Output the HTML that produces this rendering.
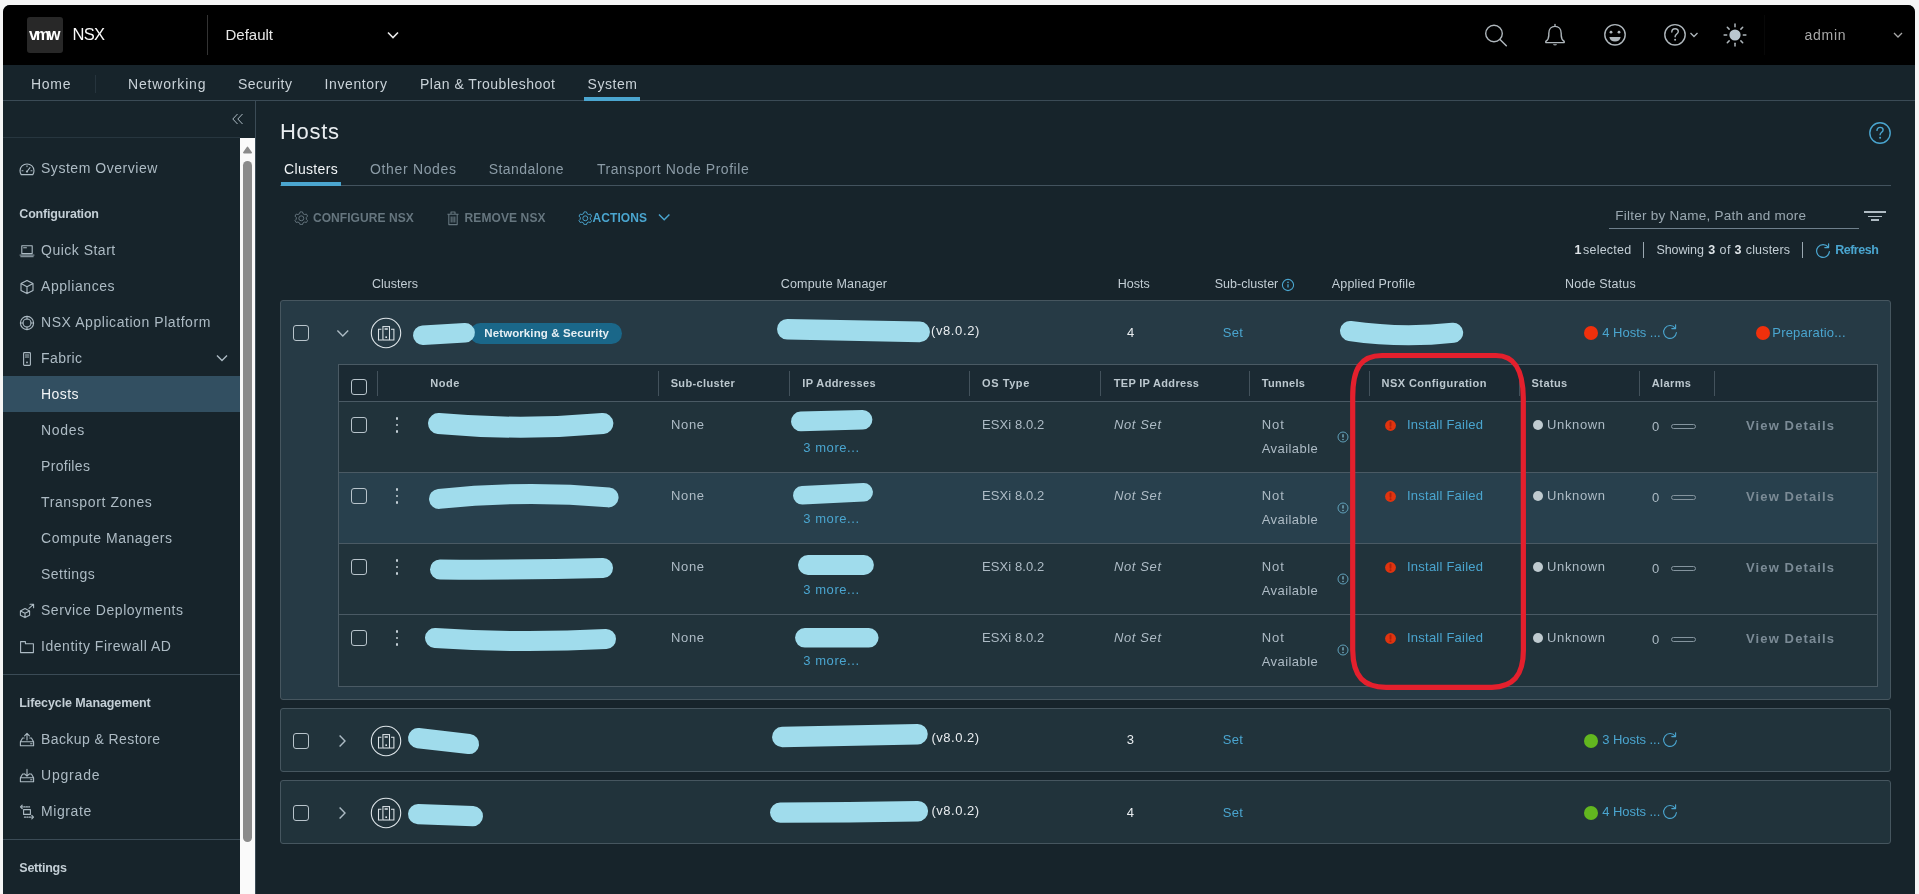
<!DOCTYPE html><html lang="en"><head><meta charset="utf-8"><title>NSX - Hosts</title><style>
html,body{margin:0;padding:0;}
body{width:1919px;height:894px;position:relative;overflow:hidden;background:#f5f5f5;font-family:"Liberation Sans", Arial, sans-serif;}
.a{position:absolute;display:block;}
.t{white-space:pre;}
</style></head><body>
<div class="a" style="left:3px;top:5px;width:1912px;height:889px;background:#17242b;border-radius:7px 7px 0 0;overflow:hidden;"><div class="a" style="left:0;top:0;width:1912px;height:60px;background:#000000;"></div></div>
<div class="a" style="left:27px;top:17px;width:36px;height:36px;background:#282828;border-radius:3px;"></div>
<div class="a" style="left:207px;top:15px;width:1px;height:40px;background:#333333;"></div>
<svg class="a" style="left:386px;top:30px;" width="14" height="10" viewBox="0 0 14 10" fill="none"><path d="M2 2.5 L7 7.5 L12 2.5" stroke="#e8e8e8" stroke-width="1.6"/></svg>
<svg class="a" style="left:1482px;top:22px;" width="28" height="28" viewBox="0 0 28 28" fill="none"><circle cx="12" cy="11.5" r="8.3" stroke="#aeb6bb" stroke-width="1.4"/><path d="M18 17.5 L24.3 23.8" stroke="#aeb6bb" stroke-width="1.5" stroke-linecap="round"/></svg>
<svg class="a" style="left:1542px;top:22px;" width="28" height="28" viewBox="0 0 28 28" fill="none"><path d="M13 2.4 V4 M3.8 19.4 C5.8 18 6.8 16.2 6.8 13.2 V11.4 C6.8 7.2 9.4 4.4 13 4.4 C16.6 4.4 19.2 7.2 19.2 11.4 V13.2 C19.2 16.2 20.2 18 22.2 19.4 V20.6 H3.8 Z" stroke="#aeb6bb" stroke-width="1.4" stroke-linejoin="round" stroke-linecap="round"/><path d="M11 22.2 C11.6 23.8 14.4 23.8 15 22.2 Z" fill="#aeb6bb"/></svg>
<svg class="a" style="left:1601px;top:21px;" width="28" height="28" viewBox="0 0 28 28" fill="none"><circle cx="14" cy="13.8" r="10.2" stroke="#aeb6bb" stroke-width="1.4"/><circle cx="10" cy="11.2" r="1.4" fill="#aeb6bb"/><circle cx="18" cy="11.2" r="1.4" fill="#aeb6bb"/><path d="M8.4 16 H19.6 C19.2 19 17 20.6 14 20.6 C11 20.6 8.8 19 8.4 16 Z" fill="#aeb6bb"/></svg>
<svg class="a" style="left:1661px;top:21px;" width="28" height="28" viewBox="0 0 28 28" fill="none"><circle cx="14" cy="13.8" r="10.2" stroke="#aeb6bb" stroke-width="1.4"/><path d="M10.8 11 C10.8 8.9 12.2 7.8 14.1 7.8 C16 7.8 17.3 9 17.3 10.6 C17.3 13 14.1 13.2 14.1 15.8" stroke="#aeb6bb" stroke-width="1.4" stroke-linecap="round"/><circle cx="14.1" cy="18.8" r="1" fill="#aeb6bb"/></svg>
<svg class="a" style="left:1689px;top:31px;" width="10" height="8" viewBox="0 0 10 8" fill="none"><path d="M1.5 2 L5 5.5 L8.5 2" stroke="#aeb6bb" stroke-width="1.3"/></svg>
<svg class="a" style="left:1721px;top:21px;" width="28" height="28" viewBox="0 0 28 28" fill="none"><circle cx="14" cy="14" r="5.6" fill="#bac7d0"/><path d="M14 3.0999999999999996 V5.699999999999999" transform="rotate(0 14 14)" stroke="#aeb6bb" stroke-width="1.5" stroke-linecap="round"/><path d="M14 3.0999999999999996 V5.699999999999999" transform="rotate(45 14 14)" stroke="#aeb6bb" stroke-width="1.5" stroke-linecap="round"/><path d="M14 3.0999999999999996 V5.699999999999999" transform="rotate(90 14 14)" stroke="#aeb6bb" stroke-width="1.5" stroke-linecap="round"/><path d="M14 3.0999999999999996 V5.699999999999999" transform="rotate(135 14 14)" stroke="#aeb6bb" stroke-width="1.5" stroke-linecap="round"/><path d="M14 3.0999999999999996 V5.699999999999999" transform="rotate(180 14 14)" stroke="#aeb6bb" stroke-width="1.5" stroke-linecap="round"/><path d="M14 3.0999999999999996 V5.699999999999999" transform="rotate(225 14 14)" stroke="#aeb6bb" stroke-width="1.5" stroke-linecap="round"/><path d="M14 3.0999999999999996 V5.699999999999999" transform="rotate(270 14 14)" stroke="#aeb6bb" stroke-width="1.5" stroke-linecap="round"/><path d="M14 3.0999999999999996 V5.699999999999999" transform="rotate(315 14 14)" stroke="#aeb6bb" stroke-width="1.5" stroke-linecap="round"/></svg>
<div class="a" style="left:1764px;top:15px;width:1px;height:40px;background:#080808;"></div>
<svg class="a" style="left:1892px;top:31px;" width="12" height="8" viewBox="0 0 12 8" fill="none"><path d="M2 2 L6 6 L10 2" stroke="#a8a8a8" stroke-width="1.3"/></svg>
<div class="a" style="left:3px;top:100px;width:1912px;height:1px;background:#3b4b56;"></div>
<div class="a" style="left:95px;top:75px;width:1px;height:18px;background:#26343d;"></div>
<div class="a" style="left:584px;top:97px;width:56px;height:4px;background:#4ba6d0;"></div>
<div class="a" style="left:255px;top:101px;width:1px;height:793px;background:#3b4b56;"></div>
<div class="a" style="left:3px;top:137px;width:237px;height:1px;background:#27363f;"></div>
<svg class="a" style="left:231px;top:112px;" width="14" height="14" viewBox="0 0 14 14" fill="none"><path d="M6.5 2 L1.8 7 L6.5 12 M11.5 2 L6.8 7 L11.5 12" stroke="#adbbc4" stroke-width="1"/></svg>
<div class="a" style="left:240px;top:138px;width:15px;height:756px;background:#fafafa;"></div>
<svg class="a" style="left:242px;top:145px;" width="11" height="9" viewBox="0 0 11 9" fill="none"><path d="M1.8 7.6 L5.5 2.4 L9.2 7.6 Z" fill="#8b8b8b" stroke="#8b8b8b" stroke-width="1.6" stroke-linejoin="round"/></svg>
<div class="a" style="left:243px;top:161px;width:9px;height:681px;background:#8b8b8b;border-radius:4.5px;"></div>
<div class="a" style="left:3px;top:376px;width:237px;height:36px;background:#324f61;"></div>
<div class="a" style="left:3px;top:674px;width:237px;height:1px;background:#3b4b56;"></div>
<div class="a" style="left:3px;top:839px;width:237px;height:1px;background:#3b4b56;"></div>
<svg class="a" style="left:215px;top:353px;" width="14" height="10" viewBox="0 0 14 10" fill="none"><path d="M2 2.5 L7 7.5 L12 2.5" stroke="#adbbc4" stroke-width="1.4"/></svg>
<svg class="a" style="left:19px;top:160.5px;" width="16" height="16" viewBox="0 0 16 16" fill="none"><path d="M2.2 13.6 H13.8 C14.6 12.4 15 11.2 15 9.8 C15 6 11.9 3 8 3 C4.1 3 1 6 1 9.8 C1 11.2 1.4 12.4 2.2 13.6 Z" stroke="#adbbc4" stroke-width="1.1" stroke-linejoin="round" stroke-linecap="round"/><path d="M8 10.5 L11 6.6" stroke="#adbbc4" stroke-width="1.1" stroke-linejoin="round" stroke-linecap="round"/><circle cx="8" cy="10.6" r="1.1" fill="#adbbc4"/><path d="M3 9.8 H4 M8 4.8 V5.6 M12 9.8 H13" stroke="#adbbc4" stroke-width="1.1" stroke-linejoin="round" stroke-linecap="round"/></svg>
<svg class="a" style="left:19px;top:242.5px;" width="16" height="16" viewBox="0 0 16 16" fill="none"><rect x="2.8" y="2.8" width="10.4" height="7.8" stroke="#adbbc4" stroke-width="1.1" stroke-linejoin="round" stroke-linecap="round"/><path d="M1 12.1 H15 M1.8 13.7 H14.2" stroke="#adbbc4" stroke-width="0.9" stroke-linecap="round"/><path d="M4.6 4.8 H7.4" stroke="#adbbc4" stroke-width="1.1" stroke-linejoin="round" stroke-linecap="round"/></svg>
<svg class="a" style="left:19px;top:278.5px;" width="16" height="16" viewBox="0 0 16 16" fill="none"><path d="M8 1.4 L14 4.6 V11.4 L8 14.6 L2 11.4 V4.6 Z M2 4.6 L8 7.8 L14 4.6 M8 7.8 V14.6" stroke="#adbbc4" stroke-width="1.1" stroke-linejoin="round" stroke-linecap="round"/></svg>
<svg class="a" style="left:19px;top:314.5px;" width="16" height="16" viewBox="0 0 16 16" fill="none"><circle cx="8" cy="8" r="6.6" stroke="#adbbc4" stroke-width="1.1" stroke-linejoin="round" stroke-linecap="round"/><circle cx="8" cy="8" r="4" stroke="#adbbc4" stroke-width="1.1" stroke-linejoin="round" stroke-linecap="round"/><path d="M8 1.4 V4 M8 12 V14.6 M1.4 8 H4 M12 8 H14.6" stroke="#adbbc4" stroke-width="1.1" stroke-linejoin="round" stroke-linecap="round"/></svg>
<svg class="a" style="left:19px;top:350.5px;" width="16" height="16" viewBox="0 0 16 16" fill="none"><rect x="4.6" y="1.6" width="6.8" height="12.8" rx="0.8" stroke="#adbbc4" stroke-width="1.1" stroke-linejoin="round" stroke-linecap="round"/><path d="M6.4 4 H9.6 M6.4 6 H9.6" stroke="#adbbc4" stroke-width="1.1" stroke-linejoin="round" stroke-linecap="round"/><rect x="7.2" y="10.6" width="1.6" height="1.6" fill="#adbbc4"/></svg>
<svg class="a" style="left:19px;top:602.5px;" width="16" height="16" viewBox="0 0 16 16" fill="none"><path d="M6 5.6 L10.6 7.9 V12.3 L6 14.6 L1.4 12.3 V7.9 Z M1.4 7.9 L6 10.2 L10.6 7.9 M6 10.2 V14.6" stroke="#adbbc4" stroke-width="1.1" stroke-linejoin="round" stroke-linecap="round"/><path d="M10 5.4 L14.4 1.4 M11 1.2 H14.6 V4.8" stroke="#adbbc4" stroke-width="1.1" stroke-linejoin="round" stroke-linecap="round"/></svg>
<svg class="a" style="left:19px;top:638.5px;" width="16" height="16" viewBox="0 0 16 16" fill="none"><path d="M1.6 13.6 V2.6 H6.4 V4.8 H14.4 V13.6 Z" stroke="#adbbc4" stroke-width="1.1" stroke-linejoin="round" stroke-linecap="round"/></svg>
<svg class="a" style="left:19px;top:731.5px;" width="16" height="16" viewBox="0 0 16 16" fill="none"><path d="M5.2 6 H3.6 L1.4 9.8 V13.8 H14.6 V9.8 L12.4 6 H10.8 M1.4 9.8 H14.6" stroke="#adbbc4" stroke-width="1.1" stroke-linejoin="round" stroke-linecap="round"/><path d="M8 8 V1.6 M5.6 3.8 L8 1.4 L10.4 3.8" stroke="#adbbc4" stroke-width="1.1" stroke-linejoin="round" stroke-linecap="round"/><path d="M11.6 11.8 H13" stroke="#adbbc4" stroke-width="1.1" stroke-linejoin="round" stroke-linecap="round"/></svg>
<svg class="a" style="left:19px;top:767.5px;" width="16" height="16" viewBox="0 0 16 16" fill="none"><path d="M5 6 H3.6 L1.4 9.8 V13.8 H14.6 V9.8 L12.4 6 H11 M1.4 9.8 H14.6" stroke="#adbbc4" stroke-width="1.1" stroke-linejoin="round" stroke-linecap="round"/><path d="M8 1.4 V8 M5.6 5.8 L8 8.2 L10.4 5.8" stroke="#adbbc4" stroke-width="1.1" stroke-linejoin="round" stroke-linecap="round"/><path d="M11.6 11.8 H13" stroke="#adbbc4" stroke-width="1.1" stroke-linejoin="round" stroke-linecap="round"/></svg>
<svg class="a" style="left:19px;top:803.5px;" width="16" height="16" viewBox="0 0 16 16" fill="none"><rect x="4.6" y="5.6" width="6.8" height="4.8" stroke="#adbbc4" stroke-width="1.1" stroke-linejoin="round" stroke-linecap="round"/><path d="M2.4 2.9 H10.6" stroke="#adbbc4" stroke-width="1.1" stroke-linejoin="round" stroke-linecap="round" stroke-dasharray="1.3 1.1"/><path d="M3.2 1.2 L1.5 2.9 L3.2 4.6" stroke="#adbbc4" stroke-width="1.1" stroke-linejoin="round" stroke-linecap="round"/><path d="M5.4 13.1 H13.6" stroke="#adbbc4" stroke-width="1.1" stroke-linejoin="round" stroke-linecap="round" stroke-dasharray="1.3 1.1"/><path d="M12.8 11.4 L14.5 13.1 L12.8 14.8" stroke="#adbbc4" stroke-width="1.1" stroke-linejoin="round" stroke-linecap="round"/></svg>
<svg class="a" style="left:1867.5px;top:120.8px;" width="24" height="24" viewBox="0 0 24 24" fill="none"><circle cx="12" cy="12" r="10.2" stroke="#4aa5cf" stroke-width="1.4"/><path d="M9 9.4 C9 7.4 10.3 6.4 12.1 6.4 C13.9 6.4 15.1 7.5 15.1 9 C15.1 11.2 12.1 11.4 12.1 13.8" stroke="#4aa5cf" stroke-width="1.4" stroke-linecap="round"/><circle cx="12.1" cy="16.8" r="1" fill="#4aa5cf"/></svg>
<div class="a" style="left:280px;top:185px;width:1611px;height:1px;background:#43535e;"></div>
<div class="a" style="left:281px;top:182px;width:60px;height:4px;background:#4ba6d0;"></div>
<svg class="a" style="left:293.7px;top:210.7px;" width="14.6" height="14.6" viewBox="0 0 16 16" fill="none"><path d="M8 0.9 L9.3 1 L9.9 2.9 L11.7 3.9 L13.6 3.4 L14.9 5.6 L13.5 7 V9 L14.9 10.4 L13.6 12.6 L11.7 12.1 L9.9 13.1 L9.3 15 H6.7 L6.1 13.1 L4.3 12.1 L2.4 12.6 L1.1 10.4 L2.5 9 V7 L1.1 5.6 L2.4 3.4 L4.3 3.9 L6.1 2.9 L6.7 1 Z" stroke="#66767f" stroke-width="1.05" stroke-linejoin="round" fill="none"/><circle cx="8" cy="8" r="2.7" stroke="#66767f" stroke-width="1.05"/></svg>
<svg class="a" style="left:445px;top:210px;" width="16" height="16" viewBox="0 0 16 16" fill="none"><path d="M2.4 4.2 H13.6 M6 4 V2 H10 V4 M3.8 4.4 V14.6 H12.2 V4.4 M6.2 6.6 V12.4 M8 6.6 V12.4 M9.8 6.6 V12.4" stroke="#66767f" stroke-width="1.1" stroke-linejoin="round"/></svg>
<svg class="a" style="left:577.7px;top:210.7px;" width="14.6" height="14.6" viewBox="0 0 16 16" fill="none"><path d="M8 0.9 L9.3 1 L9.9 2.9 L11.7 3.9 L13.6 3.4 L14.9 5.6 L13.5 7 V9 L14.9 10.4 L13.6 12.6 L11.7 12.1 L9.9 13.1 L9.3 15 H6.7 L6.1 13.1 L4.3 12.1 L2.4 12.6 L1.1 10.4 L2.5 9 V7 L1.1 5.6 L2.4 3.4 L4.3 3.9 L6.1 2.9 L6.7 1 Z" stroke="#4aa5cf" stroke-width="1.05" stroke-linejoin="round" fill="none"/><circle cx="8" cy="8" r="2.7" stroke="#4aa5cf" stroke-width="1.05"/></svg>
<svg class="a" style="left:657px;top:212px;" width="14" height="10" viewBox="0 0 14 10" fill="none"><path d="M2 2.5 L7.2 7.7 L12.4 2.5" stroke="#4aa5cf" stroke-width="1.5"/></svg>
<div class="a" style="left:1609px;top:228px;width:250px;height:1px;background:#6f808c;"></div>
<div class="a" style="left:1864px;top:211.4px;width:21.5px;height:1.3px;background:#b0bcc4;"></div>
<div class="a" style="left:1868px;top:215.6px;width:13.5px;height:1.3px;background:#b0bcc4;"></div>
<div class="a" style="left:1871.2px;top:219.3px;width:7.4px;height:1.3px;background:#b0bcc4;"></div>
<div class="a" style="left:1643.4px;top:242px;width:1px;height:16px;background:#9aa8b1;"></div>
<div class="a" style="left:1802.4px;top:242px;width:1px;height:16px;background:#9aa8b1;"></div>
<svg class="a" style="left:1814.8px;top:243.3px;" width="16" height="16" viewBox="0 0 16 16" fill="none"><path d="M13.2 4.2 A6.4 6.4 0 1 0 14.4 8.6" stroke="#4aa5cf" stroke-width="1.2" stroke-linecap="round"/><path d="M13.6 0.8 V4.6 H9.8" stroke="#4aa5cf" stroke-width="1.2" stroke-linecap="round" stroke-linejoin="round"/></svg>
<svg class="a" style="left:1280.8px;top:277.7px;" width="14" height="14" viewBox="0 0 14 14" fill="none"><circle cx="7" cy="7" r="5.6" stroke="#4aa5cf" stroke-width="1.1"/><path d="M7 6.2 V9.6" stroke="#4aa5cf" stroke-width="1.3"/><circle cx="7" cy="4.4" r="0.8" fill="#4aa5cf"/></svg>
<div class="a" style="left:280px;top:300px;width:1611px;height:400px;background:#263a45;border:1px solid #46565f;border-radius:3px;box-sizing:border-box;"></div>
<div class="a" style="left:280px;top:708px;width:1611px;height:64px;background:#21333b;border:1px solid #46565f;border-radius:3px;box-sizing:border-box;"></div>
<div class="a" style="left:280px;top:780px;width:1611px;height:64px;background:#21333b;border:1px solid #46565f;border-radius:3px;box-sizing:border-box;"></div>
<div class="a" style="left:293px;top:325px;width:16px;height:16px;border:1px solid #b8c4cb;border-radius:3px;box-sizing:border-box;"></div>
<svg class="a" style="left:336px;top:328px;" width="14" height="10" viewBox="0 0 14 10" fill="none"><path d="M1.4 2.6 L6.8 8 L12.2 2.6" stroke="#adbbc4" stroke-width="1.4"/></svg>
<svg class="a" style="left:369.7px;top:317px;" width="32" height="32" viewBox="0 0 32 32" fill="none"><circle cx="16" cy="16" r="14.7" stroke="#dde4e8" stroke-width="1.1"/><rect x="12.9" y="9.6" width="6.6" height="13.4" stroke="#dde4e8" stroke-width="1.05"/><path d="M11.4 12.3 H8.5 V23 H12.4 M21 12.3 H23.9 V23 H20" stroke="#dde4e8" stroke-width="1.05"/><path d="M14.6 12 H17.8" stroke="#dde4e8" stroke-width="1.5"/><rect x="15.4" y="19.4" width="1.6" height="1.6" fill="#dde4e8"/></svg>
<div class="a" style="left:470px;top:322.8px;width:151.8px;height:21.2px;background:#1a6789;border-radius:10.6px;"></div>
<svg class="a" style="left:409.5px;top:320.0px;" width="67.9" height="28.1" viewBox="409.5 320.0 67.9 28.1" fill="none"><path d="M422.3 335.3 L464.6 332.8" stroke="#a0dcec" stroke-width="19.6" stroke-linecap="round"/></svg>
<svg class="a" style="left:774.0px;top:316.3px;" width="159.0" height="29.2" viewBox="774.0 316.3 159.0 29.2" fill="none"><path d="M787.3 329.6 Q853.5 331.1 919.7 332.2" stroke="#a0dcec" stroke-width="20.6" stroke-linecap="round"/></svg>
<svg class="a" style="left:1337.0px;top:318.0px;" width="129.2" height="30.2" viewBox="1337.0 318.0 129.2 30.2" fill="none"><path d="M1350.0 331.0 Q1401.6 338.5 1453.2 332.8" stroke="#a0dcec" stroke-width="20" stroke-linecap="round"/></svg>
<div class="a" style="left:1584.0px;top:326.1px;width:14.4px;height:14.4px;background:#f0300c;border-radius:50%;"></div>
<svg class="a" style="left:1661.8px;top:323.8px;" width="16" height="16" viewBox="0 0 16 16" fill="none"><path d="M13.2 4.2 A6.4 6.4 0 1 0 14.4 8.6" stroke="#4aa5cf" stroke-width="1.1" stroke-linecap="round"/><path d="M13.6 0.8 V4.6 H9.8" stroke="#4aa5cf" stroke-width="1.1" stroke-linecap="round" stroke-linejoin="round"/></svg>
<div class="a" style="left:1755.8px;top:326.1px;width:14.4px;height:14.4px;background:#f0300c;border-radius:50%;"></div>
<div class="a" style="left:293px;top:733.0px;width:16px;height:16px;border:1px solid #b8c4cb;border-radius:3px;box-sizing:border-box;"></div>
<svg class="a" style="left:337px;top:733.5px;" width="10" height="14" viewBox="0 0 10 14" fill="none"><path d="M2.6 1.4 L8 7 L2.6 12.6" stroke="#adbbc4" stroke-width="1.4"/></svg>
<svg class="a" style="left:369.6px;top:724.7px;" width="32" height="32" viewBox="0 0 32 32" fill="none"><circle cx="16" cy="16" r="14.7" stroke="#dde4e8" stroke-width="1.1"/><rect x="12.9" y="9.6" width="6.6" height="13.4" stroke="#dde4e8" stroke-width="1.05"/><path d="M11.4 12.3 H8.5 V23 H12.4 M21 12.3 H23.9 V23 H20" stroke="#dde4e8" stroke-width="1.05"/><path d="M14.6 12 H17.8" stroke="#dde4e8" stroke-width="1.5"/><rect x="15.4" y="19.4" width="1.6" height="1.6" fill="#dde4e8"/></svg>
<svg class="a" style="left:405.2px;top:725.3px;" width="77.1" height="32.1" viewBox="405.2 725.3 77.1 32.1" fill="none"><path d="M418.3 738.4 L469.2 744.3" stroke="#a0dcec" stroke-width="20.2" stroke-linecap="round"/></svg>
<svg class="a" style="left:769.4px;top:721.0px;" width="161.8" height="29.2" viewBox="769.4 721.0 161.8 29.2" fill="none"><path d="M782.6 737.0 Q850.3 735.4 918.0 734.2" stroke="#a0dcec" stroke-width="20.4" stroke-linecap="round"/></svg>
<div class="a" style="left:1583.7px;top:733.6999999999999px;width:14.2px;height:14.2px;background:#62b71f;border-radius:50%;"></div>
<svg class="a" style="left:1661.8px;top:731.5px;" width="16" height="16" viewBox="0 0 16 16" fill="none"><path d="M13.2 4.2 A6.4 6.4 0 1 0 14.4 8.6" stroke="#4aa5cf" stroke-width="1.1" stroke-linecap="round"/><path d="M13.6 0.8 V4.6 H9.8" stroke="#4aa5cf" stroke-width="1.1" stroke-linecap="round" stroke-linejoin="round"/></svg>
<div class="a" style="left:293px;top:805.2px;width:16px;height:16px;border:1px solid #b8c4cb;border-radius:3px;box-sizing:border-box;"></div>
<svg class="a" style="left:337px;top:805.7px;" width="10" height="14" viewBox="0 0 10 14" fill="none"><path d="M2.6 1.4 L8 7 L2.6 12.6" stroke="#adbbc4" stroke-width="1.4"/></svg>
<svg class="a" style="left:369.6px;top:796.9000000000001px;" width="32" height="32" viewBox="0 0 32 32" fill="none"><circle cx="16" cy="16" r="14.7" stroke="#dde4e8" stroke-width="1.1"/><rect x="12.9" y="9.6" width="6.6" height="13.4" stroke="#dde4e8" stroke-width="1.05"/><path d="M11.4 12.3 H8.5 V23 H12.4 M21 12.3 H23.9 V23 H20" stroke="#dde4e8" stroke-width="1.05"/><path d="M14.6 12 H17.8" stroke="#dde4e8" stroke-width="1.5"/><rect x="15.4" y="19.4" width="1.6" height="1.6" fill="#dde4e8"/></svg>
<svg class="a" style="left:405.2px;top:800.6px;" width="81.0" height="28.2" viewBox="405.2 800.6 81.0 28.2" fill="none"><path d="M418.3 813.7 L473.1 815.7" stroke="#a0dcec" stroke-width="20.2" stroke-linecap="round"/></svg>
<svg class="a" style="left:767.4px;top:798.2px;" width="164.1" height="27.8" viewBox="767.4 798.2 164.1 27.8" fill="none"><path d="M780.6 812.8 Q849.5 812.7 918.3 811.4" stroke="#a0dcec" stroke-width="20.4" stroke-linecap="round"/></svg>
<div class="a" style="left:1583.7px;top:805.9px;width:14.2px;height:14.2px;background:#62b71f;border-radius:50%;"></div>
<svg class="a" style="left:1661.8px;top:803.7px;" width="16" height="16" viewBox="0 0 16 16" fill="none"><path d="M13.2 4.2 A6.4 6.4 0 1 0 14.4 8.6" stroke="#4aa5cf" stroke-width="1.1" stroke-linecap="round"/><path d="M13.6 0.8 V4.6 H9.8" stroke="#4aa5cf" stroke-width="1.1" stroke-linecap="round" stroke-linejoin="round"/></svg>
<div class="a" style="left:338px;top:364px;width:1539.5px;height:323px;background:#21333b;border:1px solid #4a5a64;box-sizing:border-box;"></div>
<div class="a" style="left:339px;top:365px;width:1537.5px;height:36px;background:#1b2a33;"></div>
<div class="a" style="left:339px;top:401px;width:1537.5px;height:1px;background:#4a5a64;"></div>
<div class="a" style="left:339px;top:473px;width:1537.5px;height:70px;background:#28404d;"></div>
<div class="a" style="left:339px;top:472px;width:1537.5px;height:1px;background:#4a5a64;"></div>
<div class="a" style="left:339px;top:543px;width:1537.5px;height:1px;background:#4a5a64;"></div>
<div class="a" style="left:339px;top:614px;width:1537.5px;height:1px;background:#4a5a64;"></div>
<div class="a" style="left:351px;top:379px;width:16px;height:16px;border:1px solid #b8c4cb;border-radius:3px;box-sizing:border-box;"></div>
<div class="a" style="left:377px;top:371px;width:1px;height:25px;background:#43525c;"></div>
<div class="a" style="left:658px;top:371px;width:1px;height:25px;background:#43525c;"></div>
<div class="a" style="left:789px;top:371px;width:1px;height:25px;background:#43525c;"></div>
<div class="a" style="left:969px;top:371px;width:1px;height:25px;background:#43525c;"></div>
<div class="a" style="left:1100px;top:371px;width:1px;height:25px;background:#43525c;"></div>
<div class="a" style="left:1249px;top:371px;width:1px;height:25px;background:#43525c;"></div>
<div class="a" style="left:1369px;top:371px;width:1px;height:25px;background:#43525c;"></div>
<div class="a" style="left:1519px;top:371px;width:1px;height:25px;background:#43525c;"></div>
<div class="a" style="left:1639px;top:371px;width:1px;height:25px;background:#43525c;"></div>
<div class="a" style="left:1714px;top:371px;width:1px;height:25px;background:#43525c;"></div>
<div class="a" style="left:351px;top:417px;width:16px;height:16px;border:1px solid #b8c4cb;border-radius:3px;box-sizing:border-box;"></div>
<div class="a" style="left:395.55px;top:417.35px;width:2.5px;height:2.5px;background:#c5d0d7;border-radius:50%;"></div>
<div class="a" style="left:395.55px;top:423.75px;width:2.5px;height:2.5px;background:#c5d0d7;border-radius:50%;"></div>
<div class="a" style="left:395.55px;top:430.15px;width:2.5px;height:2.5px;background:#c5d0d7;border-radius:50%;"></div>
<svg class="a" style="left:424.6px;top:409.8px;" width="191.4" height="30.7" viewBox="424.6 409.8 191.4 30.7" fill="none"><path d="M438.1 423.3 Q520.3 430.7 602.5 423.3" stroke="#a0dcec" stroke-width="21" stroke-linecap="round"/></svg>
<svg class="a" style="left:788.0px;top:407.4px;" width="87.4" height="27.2" viewBox="788.0 407.4 87.4 27.2" fill="none"><path d="M800.8 421.8 L862.6 420.2" stroke="#a0dcec" stroke-width="19.6" stroke-linecap="round"/></svg>
<svg class="a" style="left:1336.2px;top:430px;" width="14" height="14" viewBox="0 0 14 14" fill="none"><circle cx="7" cy="7" r="5" fill="none" stroke="#5fa0b9" stroke-width="1"/><path d="M7 4.2 V7.6" stroke="#7db6ca" stroke-width="1.3"/><circle cx="7" cy="9.6" r="0.75" fill="#7db6ca"/></svg>
<svg class="a" style="left:1383.5px;top:418.8px;" width="13" height="13" viewBox="0 0 13 13" fill="none"><circle cx="6.5" cy="6.5" r="5.4" fill="#e0340f"/><path d="M6.5 3.4 V6.8" stroke="#b0200c" stroke-width="1.9" stroke-linecap="round"/><circle cx="6.5" cy="9.3" r="1.05" fill="#b0200c"/></svg>
<div class="a" style="left:1532.7px;top:420.1px;width:10.4px;height:10.4px;background:#bfcbd0;border-radius:50%;"></div>
<div class="a" style="left:1671px;top:424.1px;width:25px;height:5px;border:1px solid #84949e;border-radius:3px;box-sizing:border-box;"></div>
<div class="a" style="left:351px;top:488px;width:16px;height:16px;border:1px solid #b8c4cb;border-radius:3px;box-sizing:border-box;"></div>
<div class="a" style="left:395.55px;top:488.35px;width:2.5px;height:2.5px;background:#c5d0d7;border-radius:50%;"></div>
<div class="a" style="left:395.55px;top:494.75px;width:2.5px;height:2.5px;background:#c5d0d7;border-radius:50%;"></div>
<div class="a" style="left:395.55px;top:501.15px;width:2.5px;height:2.5px;background:#c5d0d7;border-radius:50%;"></div>
<svg class="a" style="left:426.0px;top:481.0px;" width="195.6" height="30.9" viewBox="426.0 481.0 195.6 30.9" fill="none"><path d="M439.0 498.9 Q523.8 489.9 608.6 497.4" stroke="#a0dcec" stroke-width="20" stroke-linecap="round"/></svg>
<svg class="a" style="left:790.3px;top:479.5px;" width="86.0" height="27.6" viewBox="790.3 479.5 86.0 27.6" fill="none"><path d="M802.6 494.8 L864.0 491.8" stroke="#a0dcec" stroke-width="18.6" stroke-linecap="round"/></svg>
<svg class="a" style="left:1336.2px;top:501px;" width="14" height="14" viewBox="0 0 14 14" fill="none"><circle cx="7" cy="7" r="5" fill="none" stroke="#5fa0b9" stroke-width="1"/><path d="M7 4.2 V7.6" stroke="#7db6ca" stroke-width="1.3"/><circle cx="7" cy="9.6" r="0.75" fill="#7db6ca"/></svg>
<svg class="a" style="left:1383.5px;top:489.8px;" width="13" height="13" viewBox="0 0 13 13" fill="none"><circle cx="6.5" cy="6.5" r="5.4" fill="#e0340f"/><path d="M6.5 3.4 V6.8" stroke="#b0200c" stroke-width="1.9" stroke-linecap="round"/><circle cx="6.5" cy="9.3" r="1.05" fill="#b0200c"/></svg>
<div class="a" style="left:1532.7px;top:491.1px;width:10.4px;height:10.4px;background:#bfcbd0;border-radius:50%;"></div>
<div class="a" style="left:1671px;top:495.1px;width:25px;height:5px;border:1px solid #84949e;border-radius:3px;box-sizing:border-box;"></div>
<div class="a" style="left:351px;top:559px;width:16px;height:16px;border:1px solid #b8c4cb;border-radius:3px;box-sizing:border-box;"></div>
<div class="a" style="left:395.55px;top:559.35px;width:2.5px;height:2.5px;background:#c5d0d7;border-radius:50%;"></div>
<div class="a" style="left:395.55px;top:565.75px;width:2.5px;height:2.5px;background:#c5d0d7;border-radius:50%;"></div>
<div class="a" style="left:395.55px;top:572.15px;width:2.5px;height:2.5px;background:#c5d0d7;border-radius:50%;"></div>
<svg class="a" style="left:427.0px;top:555.0px;" width="189.0" height="27.5" viewBox="427.0 555.0 189.0 27.5" fill="none"><path d="M440.0 569.5 Q521.5 570.2 603.0 568.0" stroke="#a0dcec" stroke-width="20" stroke-linecap="round"/></svg>
<svg class="a" style="left:795.2px;top:552.2px;" width="81.9" height="26.0" viewBox="795.2 552.2 81.9 26.0" fill="none"><path d="M808.2 565.2 L864.1 565.2" stroke="#a0dcec" stroke-width="20" stroke-linecap="round"/></svg>
<svg class="a" style="left:1336.2px;top:572px;" width="14" height="14" viewBox="0 0 14 14" fill="none"><circle cx="7" cy="7" r="5" fill="none" stroke="#5fa0b9" stroke-width="1"/><path d="M7 4.2 V7.6" stroke="#7db6ca" stroke-width="1.3"/><circle cx="7" cy="9.6" r="0.75" fill="#7db6ca"/></svg>
<svg class="a" style="left:1383.5px;top:560.8px;" width="13" height="13" viewBox="0 0 13 13" fill="none"><circle cx="6.5" cy="6.5" r="5.4" fill="#e0340f"/><path d="M6.5 3.4 V6.8" stroke="#b0200c" stroke-width="1.9" stroke-linecap="round"/><circle cx="6.5" cy="9.3" r="1.05" fill="#b0200c"/></svg>
<div class="a" style="left:1532.7px;top:562.0999999999999px;width:10.4px;height:10.4px;background:#bfcbd0;border-radius:50%;"></div>
<div class="a" style="left:1671px;top:566.1px;width:25px;height:5px;border:1px solid #84949e;border-radius:3px;box-sizing:border-box;"></div>
<div class="a" style="left:351px;top:630px;width:16px;height:16px;border:1px solid #b8c4cb;border-radius:3px;box-sizing:border-box;"></div>
<div class="a" style="left:395.55px;top:630.35px;width:2.5px;height:2.5px;background:#c5d0d7;border-radius:50%;"></div>
<div class="a" style="left:395.55px;top:636.75px;width:2.5px;height:2.5px;background:#c5d0d7;border-radius:50%;"></div>
<div class="a" style="left:395.55px;top:643.15px;width:2.5px;height:2.5px;background:#c5d0d7;border-radius:50%;"></div>
<svg class="a" style="left:421.7px;top:624.7px;" width="197.0" height="29.1" viewBox="421.7 624.7 197.0 29.1" fill="none"><path d="M434.7 637.7 Q520.2 643.4 605.7 638.7" stroke="#a0dcec" stroke-width="20" stroke-linecap="round"/></svg>
<svg class="a" style="left:791.7px;top:625.2px;" width="89.5" height="25.5" viewBox="791.7 625.2 89.5 25.5" fill="none"><path d="M804.5 638.0 L868.5 638.0" stroke="#a0dcec" stroke-width="19.5" stroke-linecap="round"/></svg>
<svg class="a" style="left:1336.2px;top:643px;" width="14" height="14" viewBox="0 0 14 14" fill="none"><circle cx="7" cy="7" r="5" fill="none" stroke="#5fa0b9" stroke-width="1"/><path d="M7 4.2 V7.6" stroke="#7db6ca" stroke-width="1.3"/><circle cx="7" cy="9.6" r="0.75" fill="#7db6ca"/></svg>
<svg class="a" style="left:1383.5px;top:631.8px;" width="13" height="13" viewBox="0 0 13 13" fill="none"><circle cx="6.5" cy="6.5" r="5.4" fill="#e0340f"/><path d="M6.5 3.4 V6.8" stroke="#b0200c" stroke-width="1.9" stroke-linecap="round"/><circle cx="6.5" cy="9.3" r="1.05" fill="#b0200c"/></svg>
<div class="a" style="left:1532.7px;top:633.0999999999999px;width:10.4px;height:10.4px;background:#bfcbd0;border-radius:50%;"></div>
<div class="a" style="left:1671px;top:637.1px;width:25px;height:5px;border:1px solid #84949e;border-radius:3px;box-sizing:border-box;"></div>
<svg class="a" style="left:1340px;top:340px;" width="200" height="360" viewBox="1340 340 200 360" fill="none"><path d="M1352.7 397 C1352.7 368 1361 355.5 1382 355.5 L1496 355.5 C1515 355.5 1523 370 1523.3 398 L1523.4 650 C1523.4 676 1513 687 1492 687.3 L1386 687.3 C1364 687 1353 677 1352.7 650 Z" stroke="#e4202d" stroke-width="5.2" stroke-linejoin="round"/></svg>
<div class="a" id="tl" style="left:0;top:0;width:1919px;height:894px;will-change:transform;">
<span class="a t" id="t0" style="left:29px;top:24.0px;font-size:16px;line-height:22px;color:#ffffff;font-weight:700;letter-spacing:-2.039px;">vmw</span>
<span class="a t" id="t1" style="left:72.5px;top:23.0px;font-size:16.5px;line-height:23px;color:#fafafa;letter-spacing:-0.719px;">NSX</span>
<span class="a t" id="t2" style="left:225.5px;top:23.700000000000003px;font-size:15px;line-height:21px;color:#e8e8e8;letter-spacing:-0.005px;">Default</span>
<span class="a t" id="t3" style="left:1804.5px;top:25.0px;font-size:14px;line-height:20px;color:#a8a8a8;letter-spacing:0.715px;">admin</span>
<span class="a t" id="t4" style="left:31px;top:74.0px;font-size:14px;line-height:20px;color:#c9d2d8;letter-spacing:0.714px;">Home</span>
<span class="a t" id="t5" style="left:128px;top:74.0px;font-size:14px;line-height:20px;color:#c9d2d8;letter-spacing:0.830px;">Networking</span>
<span class="a t" id="t6" style="left:238px;top:74.0px;font-size:14px;line-height:20px;color:#c9d2d8;letter-spacing:0.489px;">Security</span>
<span class="a t" id="t7" style="left:324.5px;top:74.0px;font-size:14px;line-height:20px;color:#c9d2d8;letter-spacing:0.613px;">Inventory</span>
<span class="a t" id="t8" style="left:420px;top:74.0px;font-size:14px;line-height:20px;color:#c9d2d8;letter-spacing:0.495px;">Plan &amp; Troubleshoot</span>
<span class="a t" id="t9" style="left:587.5px;top:74.0px;font-size:14px;line-height:20px;color:#c9d2d8;letter-spacing:0.562px;">System</span>
<span class="a t" id="t10" style="left:41px;top:158.0px;font-size:14px;line-height:20px;color:#adbbc4;letter-spacing:0.534px;">System Overview</span>
<span class="a t" id="t11" style="left:19.3px;top:204.8px;font-size:12.5px;line-height:18px;color:#c3ced5;font-weight:700;letter-spacing:-0.186px;">Configuration</span>
<span class="a t" id="t12" style="left:41px;top:240.0px;font-size:14px;line-height:20px;color:#adbbc4;letter-spacing:0.495px;">Quick Start</span>
<span class="a t" id="t13" style="left:41px;top:276.0px;font-size:14px;line-height:20px;color:#adbbc4;letter-spacing:0.567px;">Appliances</span>
<span class="a t" id="t14" style="left:41px;top:312.0px;font-size:14px;line-height:20px;color:#adbbc4;letter-spacing:0.561px;">NSX Application Platform</span>
<span class="a t" id="t15" style="left:41px;top:348.0px;font-size:14px;line-height:20px;color:#adbbc4;letter-spacing:0.419px;">Fabric</span>
<span class="a t" id="t16" style="left:41px;top:384.0px;font-size:14px;line-height:20px;color:#f2f5f7;letter-spacing:0.426px;">Hosts</span>
<span class="a t" id="t17" style="left:41px;top:420.0px;font-size:14px;line-height:20px;color:#adbbc4;letter-spacing:0.708px;">Nodes</span>
<span class="a t" id="t18" style="left:41px;top:456.0px;font-size:14px;line-height:20px;color:#adbbc4;letter-spacing:0.316px;">Profiles</span>
<span class="a t" id="t19" style="left:41px;top:492.0px;font-size:14px;line-height:20px;color:#adbbc4;letter-spacing:0.614px;">Transport Zones</span>
<span class="a t" id="t20" style="left:41px;top:528.0px;font-size:14px;line-height:20px;color:#adbbc4;letter-spacing:0.530px;">Compute Managers</span>
<span class="a t" id="t21" style="left:41px;top:564.0px;font-size:14px;line-height:20px;color:#adbbc4;letter-spacing:0.458px;">Settings</span>
<span class="a t" id="t22" style="left:41px;top:600.0px;font-size:14px;line-height:20px;color:#adbbc4;letter-spacing:0.534px;">Service Deployments</span>
<span class="a t" id="t23" style="left:41px;top:636.0px;font-size:14px;line-height:20px;color:#adbbc4;letter-spacing:0.535px;">Identity Firewall AD</span>
<span class="a t" id="t24" style="left:19.3px;top:693.8px;font-size:12.5px;line-height:18px;color:#c3ced5;font-weight:700;letter-spacing:-0.100px;">Lifecycle Management</span>
<span class="a t" id="t25" style="left:41px;top:729.0px;font-size:14px;line-height:20px;color:#adbbc4;letter-spacing:0.410px;">Backup &amp; Restore</span>
<span class="a t" id="t26" style="left:41px;top:765.0px;font-size:14px;line-height:20px;color:#adbbc4;letter-spacing:0.799px;">Upgrade</span>
<span class="a t" id="t27" style="left:41px;top:801.0px;font-size:14px;line-height:20px;color:#adbbc4;letter-spacing:0.585px;">Migrate</span>
<span class="a t" id="t28" style="left:19.3px;top:858.8px;font-size:12.5px;line-height:18px;color:#c3ced5;font-weight:700;letter-spacing:-0.245px;">Settings</span>
<span class="a t" id="t29" style="left:280px;top:116.0px;font-size:22px;line-height:31px;color:#e9edf0;letter-spacing:0.688px;">Hosts</span>
<span class="a t" id="t30" style="left:284px;top:159.0px;font-size:14px;line-height:20px;color:#f2f5f7;letter-spacing:0.334px;">Clusters</span>
<span class="a t" id="t31" style="left:370px;top:159.0px;font-size:14px;line-height:20px;color:#8b9ba6;letter-spacing:0.662px;">Other Nodes</span>
<span class="a t" id="t32" style="left:488.7px;top:159.0px;font-size:14px;line-height:20px;color:#8b9ba6;letter-spacing:0.440px;">Standalone</span>
<span class="a t" id="t33" style="left:597px;top:159.0px;font-size:14px;line-height:20px;color:#8b9ba6;letter-spacing:0.542px;">Transport Node Profile</span>
<span class="a t" id="t34" style="left:313px;top:209.9px;font-size:12px;line-height:17px;color:#66767f;font-weight:700;letter-spacing:0.057px;">CONFIGURE NSX</span>
<span class="a t" id="t35" style="left:464.5px;top:209.9px;font-size:12px;line-height:17px;color:#66767f;font-weight:700;letter-spacing:0.109px;">REMOVE NSX</span>
<span class="a t" id="t36" style="left:592.5px;top:209.9px;font-size:12px;line-height:17px;color:#4aa5cf;font-weight:700;letter-spacing:0.083px;">ACTIONS</span>
<span class="a t" id="t37" style="left:1615.3px;top:206.2px;font-size:13.5px;line-height:19px;color:#9aa8b1;letter-spacing:0.245px;">Filter by Name, Path and more</span>
<span class="a t" id="t38" style="left:1574.5px;top:241.0px;font-size:12.5px;line-height:18px;color:#dfe5e9;font-weight:700;">1</span>
<span class="a t" id="t39" style="left:1583px;top:241.0px;font-size:12.5px;line-height:18px;color:#c3ced5;letter-spacing:0.234px;">selected</span>
<span class="a t" id="t40" style="left:1656.4px;top:241.0px;font-size:12.5px;line-height:18px;color:#c3ced5;letter-spacing:-0.076px;">Showing</span>
<span class="a t" id="t41" style="left:1708.2px;top:241.0px;font-size:12.5px;line-height:18px;color:#dfe5e9;font-weight:700;">3</span>
<span class="a t" id="t42" style="left:1719.6px;top:241.0px;font-size:12.5px;line-height:18px;color:#c3ced5;letter-spacing:0.562px;">of</span>
<span class="a t" id="t43" style="left:1734.6px;top:241.0px;font-size:12.5px;line-height:18px;color:#dfe5e9;font-weight:700;">3</span>
<span class="a t" id="t44" style="left:1745.7px;top:241.0px;font-size:12.5px;line-height:18px;color:#c3ced5;letter-spacing:0.189px;">clusters</span>
<span class="a t" id="t45" style="left:1835.2px;top:241.0px;font-size:12.5px;line-height:18px;color:#4aa5cf;font-weight:700;letter-spacing:-0.491px;">Refresh</span>
<span class="a t" id="t46" style="left:372px;top:274.7px;font-size:12.5px;line-height:18px;color:#c3ced5;letter-spacing:0.022px;">Clusters</span>
<span class="a t" id="t47" style="left:780.7px;top:274.7px;font-size:12.5px;line-height:18px;color:#c3ced5;letter-spacing:0.198px;">Compute Manager</span>
<span class="a t" id="t48" style="left:1117.7px;top:274.7px;font-size:12.5px;line-height:18px;color:#c3ced5;letter-spacing:0.012px;">Hosts</span>
<span class="a t" id="t49" style="left:1214.7px;top:274.7px;font-size:12.5px;line-height:18px;color:#c3ced5;letter-spacing:0.037px;">Sub-cluster</span>
<span class="a t" id="t50" style="left:1331.7px;top:274.7px;font-size:12.5px;line-height:18px;color:#c3ced5;letter-spacing:0.214px;">Applied Profile</span>
<span class="a t" id="t51" style="left:1565px;top:274.7px;font-size:12.5px;line-height:18px;color:#c3ced5;letter-spacing:0.190px;">Node Status</span>
<span class="a t" id="t52" style="left:484.3px;top:325.2px;font-size:11.5px;line-height:16px;color:#e6eff4;font-weight:700;letter-spacing:0.100px;">Networking &amp; Security</span>
<span class="a t" id="t53" style="left:931px;top:322.0px;font-size:13px;line-height:18px;color:#e9edf0;letter-spacing:0.603px;">(v8.0.2)</span>
<span class="a t" id="t54" style="left:1127px;top:324.0px;font-size:13px;line-height:18px;color:#e9edf0;">4</span>
<span class="a t" id="t55" style="left:1222.8px;top:324.0px;font-size:13px;line-height:18px;color:#4aa5cf;letter-spacing:0.242px;">Set</span>
<span class="a t" id="t56" style="left:1602.3px;top:323.5px;font-size:13px;line-height:18px;color:#4aa5cf;letter-spacing:-0.023px;">4 Hosts ...</span>
<span class="a t" id="t57" style="left:1772.3px;top:323.5px;font-size:13px;line-height:18px;color:#4aa5cf;letter-spacing:0.198px;">Preparatio...</span>
<span class="a t" id="t58" style="left:931.5px;top:728.5px;font-size:13px;line-height:18px;color:#e9edf0;letter-spacing:0.517px;">(v8.0.2)</span>
<span class="a t" id="t59" style="left:1126.8px;top:730.5px;font-size:13px;line-height:18px;color:#e9edf0;">3</span>
<span class="a t" id="t60" style="left:1222.8px;top:730.5px;font-size:13px;line-height:18px;color:#4aa5cf;letter-spacing:0.242px;">Set</span>
<span class="a t" id="t61" style="left:1602.3px;top:730.5px;font-size:13px;line-height:18px;color:#4aa5cf;letter-spacing:-0.053px;">3 Hosts ...</span>
<span class="a t" id="t62" style="left:931.5px;top:801.7px;font-size:13px;line-height:18px;color:#e9edf0;letter-spacing:0.517px;">(v8.0.2)</span>
<span class="a t" id="t63" style="left:1126.8px;top:803.7px;font-size:13px;line-height:18px;color:#e9edf0;">4</span>
<span class="a t" id="t64" style="left:1222.8px;top:803.7px;font-size:13px;line-height:18px;color:#4aa5cf;letter-spacing:0.242px;">Set</span>
<span class="a t" id="t65" style="left:1602.3px;top:803.4000000000001px;font-size:13px;line-height:18px;color:#4aa5cf;letter-spacing:-0.053px;">4 Hosts ...</span>
<span class="a t" id="t66" style="left:430.3px;top:375.8px;font-size:11px;line-height:15px;color:#bcc8cf;font-weight:700;letter-spacing:0.500px;">Node</span>
<span class="a t" id="t67" style="left:670.7px;top:375.8px;font-size:11px;line-height:15px;color:#bcc8cf;font-weight:700;letter-spacing:0.348px;">Sub-cluster</span>
<span class="a t" id="t68" style="left:802.3px;top:375.8px;font-size:11px;line-height:15px;color:#bcc8cf;font-weight:700;letter-spacing:0.391px;">IP Addresses</span>
<span class="a t" id="t69" style="left:982px;top:375.8px;font-size:11px;line-height:15px;color:#bcc8cf;font-weight:700;letter-spacing:0.581px;">OS Type</span>
<span class="a t" id="t70" style="left:1113.7px;top:375.8px;font-size:11px;line-height:15px;color:#bcc8cf;font-weight:700;letter-spacing:0.322px;">TEP IP Address</span>
<span class="a t" id="t71" style="left:1261.7px;top:375.8px;font-size:11px;line-height:15px;color:#bcc8cf;font-weight:700;letter-spacing:0.323px;">Tunnels</span>
<span class="a t" id="t72" style="left:1381.5px;top:375.8px;font-size:11px;line-height:15px;color:#bcc8cf;font-weight:700;letter-spacing:0.451px;">NSX Configuration</span>
<span class="a t" id="t73" style="left:1531.6px;top:375.8px;font-size:11px;line-height:15px;color:#bcc8cf;font-weight:700;letter-spacing:0.395px;">Status</span>
<span class="a t" id="t74" style="left:1651.7px;top:375.8px;font-size:11px;line-height:15px;color:#bcc8cf;font-weight:700;letter-spacing:0.401px;">Alarms</span>
<span class="a t" id="t75" style="left:671px;top:416.0px;font-size:13px;line-height:18px;color:#adbbc5;letter-spacing:0.641px;">None</span>
<span class="a t" id="t76" style="left:803.3px;top:439.0px;font-size:13px;line-height:18px;color:#4aa5cf;letter-spacing:0.550px;">3 more...</span>
<span class="a t" id="t77" style="left:982px;top:416.0px;font-size:13px;line-height:18px;color:#adbbc5;letter-spacing:0.096px;">ESXi 8.0.2</span>
<span class="a t" id="t78" style="left:1114px;top:416.0px;font-size:13px;line-height:18px;color:#adbbc5;font-style:italic;letter-spacing:0.607px;">Not Set</span>
<span class="a t" id="t79" style="left:1261.7px;top:416.0px;font-size:13px;line-height:18px;color:#adbbc5;letter-spacing:1.033px;">Not</span>
<span class="a t" id="t80" style="left:1261.7px;top:439.8px;font-size:13px;line-height:18px;color:#adbbc5;letter-spacing:0.434px;">Available</span>
<span class="a t" id="t81" style="left:1407px;top:416.0px;font-size:13px;line-height:18px;color:#4aa5cf;letter-spacing:0.232px;">Install Failed</span>
<span class="a t" id="t82" style="left:1547px;top:416.0px;font-size:13px;line-height:18px;color:#adbbc5;letter-spacing:0.633px;">Unknown</span>
<span class="a t" id="t83" style="left:1651.9px;top:417.8px;font-size:13px;line-height:18px;color:#adbbc5;">0</span>
<span class="a t" id="t84" style="left:1746px;top:417.3px;font-size:13px;line-height:18px;color:#7b8b96;font-weight:700;letter-spacing:1.124px;">View Details</span>
<span class="a t" id="t85" style="left:671px;top:487.0px;font-size:13px;line-height:18px;color:#adbbc5;letter-spacing:0.641px;">None</span>
<span class="a t" id="t86" style="left:803.3px;top:510.0px;font-size:13px;line-height:18px;color:#4aa5cf;letter-spacing:0.550px;">3 more...</span>
<span class="a t" id="t87" style="left:982px;top:487.0px;font-size:13px;line-height:18px;color:#adbbc5;letter-spacing:0.096px;">ESXi 8.0.2</span>
<span class="a t" id="t88" style="left:1114px;top:487.0px;font-size:13px;line-height:18px;color:#adbbc5;font-style:italic;letter-spacing:0.607px;">Not Set</span>
<span class="a t" id="t89" style="left:1261.7px;top:487.0px;font-size:13px;line-height:18px;color:#adbbc5;letter-spacing:1.033px;">Not</span>
<span class="a t" id="t90" style="left:1261.7px;top:510.79999999999995px;font-size:13px;line-height:18px;color:#adbbc5;letter-spacing:0.434px;">Available</span>
<span class="a t" id="t91" style="left:1407px;top:487.0px;font-size:13px;line-height:18px;color:#4aa5cf;letter-spacing:0.232px;">Install Failed</span>
<span class="a t" id="t92" style="left:1547px;top:487.0px;font-size:13px;line-height:18px;color:#adbbc5;letter-spacing:0.633px;">Unknown</span>
<span class="a t" id="t93" style="left:1651.9px;top:488.8px;font-size:13px;line-height:18px;color:#adbbc5;">0</span>
<span class="a t" id="t94" style="left:1746px;top:488.3px;font-size:13px;line-height:18px;color:#7b8b96;font-weight:700;letter-spacing:1.124px;">View Details</span>
<span class="a t" id="t95" style="left:671px;top:558.0px;font-size:13px;line-height:18px;color:#adbbc5;letter-spacing:0.641px;">None</span>
<span class="a t" id="t96" style="left:803.3px;top:581.0px;font-size:13px;line-height:18px;color:#4aa5cf;letter-spacing:0.550px;">3 more...</span>
<span class="a t" id="t97" style="left:982px;top:558.0px;font-size:13px;line-height:18px;color:#adbbc5;letter-spacing:0.096px;">ESXi 8.0.2</span>
<span class="a t" id="t98" style="left:1114px;top:558.0px;font-size:13px;line-height:18px;color:#adbbc5;font-style:italic;letter-spacing:0.607px;">Not Set</span>
<span class="a t" id="t99" style="left:1261.7px;top:558.0px;font-size:13px;line-height:18px;color:#adbbc5;letter-spacing:1.033px;">Not</span>
<span class="a t" id="t100" style="left:1261.7px;top:581.8px;font-size:13px;line-height:18px;color:#adbbc5;letter-spacing:0.434px;">Available</span>
<span class="a t" id="t101" style="left:1407px;top:558.0px;font-size:13px;line-height:18px;color:#4aa5cf;letter-spacing:0.232px;">Install Failed</span>
<span class="a t" id="t102" style="left:1547px;top:558.0px;font-size:13px;line-height:18px;color:#adbbc5;letter-spacing:0.633px;">Unknown</span>
<span class="a t" id="t103" style="left:1651.9px;top:559.8px;font-size:13px;line-height:18px;color:#adbbc5;">0</span>
<span class="a t" id="t104" style="left:1746px;top:559.3px;font-size:13px;line-height:18px;color:#7b8b96;font-weight:700;letter-spacing:1.124px;">View Details</span>
<span class="a t" id="t105" style="left:671px;top:629.0px;font-size:13px;line-height:18px;color:#adbbc5;letter-spacing:0.641px;">None</span>
<span class="a t" id="t106" style="left:803.3px;top:652.0px;font-size:13px;line-height:18px;color:#4aa5cf;letter-spacing:0.550px;">3 more...</span>
<span class="a t" id="t107" style="left:982px;top:629.0px;font-size:13px;line-height:18px;color:#adbbc5;letter-spacing:0.096px;">ESXi 8.0.2</span>
<span class="a t" id="t108" style="left:1114px;top:629.0px;font-size:13px;line-height:18px;color:#adbbc5;font-style:italic;letter-spacing:0.607px;">Not Set</span>
<span class="a t" id="t109" style="left:1261.7px;top:629.0px;font-size:13px;line-height:18px;color:#adbbc5;letter-spacing:1.033px;">Not</span>
<span class="a t" id="t110" style="left:1261.7px;top:652.8px;font-size:13px;line-height:18px;color:#adbbc5;letter-spacing:0.434px;">Available</span>
<span class="a t" id="t111" style="left:1407px;top:629.0px;font-size:13px;line-height:18px;color:#4aa5cf;letter-spacing:0.232px;">Install Failed</span>
<span class="a t" id="t112" style="left:1547px;top:629.0px;font-size:13px;line-height:18px;color:#adbbc5;letter-spacing:0.633px;">Unknown</span>
<span class="a t" id="t113" style="left:1651.9px;top:630.8px;font-size:13px;line-height:18px;color:#adbbc5;">0</span>
<span class="a t" id="t114" style="left:1746px;top:630.3px;font-size:13px;line-height:18px;color:#7b8b96;font-weight:700;letter-spacing:1.124px;">View Details</span>
</div>
</body></html>
